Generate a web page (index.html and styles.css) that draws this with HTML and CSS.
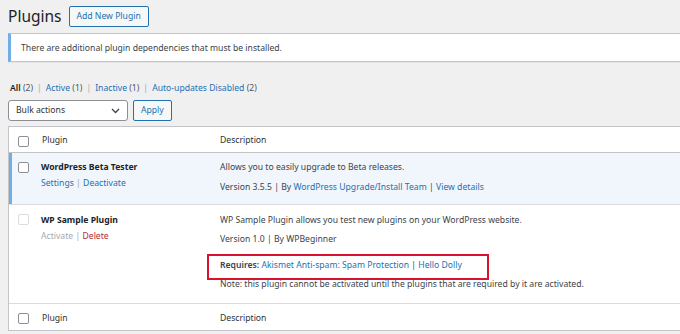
FILE: index.html
```html
<!DOCTYPE html>
<html lang="en">

<head>
    <meta charset="UTF-8">
    <meta name="viewport" content="width=device-width, initial-scale=1.0">
    <title>Plugins</title>
    <link rel="stylesheet" href="styles.css">
</head>

<body>
    <div class="wrap">
        <div class="page-head">
            <h1 class="page-title">Plugins</h1>
            <a class="button" href="#">Add New Plugin</a>
        </div>

        <div class="notice">There are additional plugin dependencies that must be installed.</div>

        <ul class="subsubsub">
            <li class="current">All <span class="count">(2)</span></li>
            <li class="sep">|</li>
            <li><a href="#">Active</a> <span class="count">(1)</span></li>
            <li class="sep">|</li>
            <li><a href="#">Inactive</a> <span class="count">(1)</span></li>
            <li class="sep">|</li>
            <li><a href="#">Auto-updates Disabled</a> <span class="count">(2)</span></li>
        </ul>

        <div class="tablenav">
            <div class="select">
                <span>Bulk actions</span>
                <svg width="9" height="6" viewBox="0 0 9 6">
                    <path d="M1 1l3.5 3.5L8 1" fill="none" stroke="#3c434a" stroke-width="1.3" />
                </svg>
            </div>
            <a class="button" href="#">Apply</a>
        </div>

        <table class="plugins">
            <colgroup>
                <col class="col-check">
                <col class="col-name">
                <col>
            </colgroup>
            <thead>
                <tr>
                    <th class="check"><input type="checkbox" class="cb"></th>
                    <th>Plugin</th>
                    <th>Description</th>
                </tr>
            </thead>
            <tbody>
                <tr class="active">
                    <th class="check"><input type="checkbox" class="cb"></th>
                    <td class="name">
                        <strong>WordPress Beta Tester</strong>
                        <div class="row-actions">
                            <a href="#">Settings</a> <span class="sep">|</span> <a href="#">Deactivate</a>
                        </div>
                    </td>
                    <td class="desc">
                        <p>Allows you to easily upgrade to Beta releases.</p>
                        <p>Version 3.5.5 | By <a href="#">WordPress Upgrade/Install Team</a> | <a href="#">View details</a></p>
                    </td>
                </tr>
                <tr class="inactive">
                    <th class="check"><input type="checkbox" class="cb" disabled></th>
                    <td class="name">
                        <strong>WP Sample Plugin</strong>
                        <div class="row-actions">
                            <span class="disabled">Activate</span> <span class="sep">|</span> <a class="delete" href="#">Delete</a>
                        </div>
                    </td>
                    <td class="desc">
                        <p>WP Sample Plugin allows you test new plugins on your WordPress website.</p>
                        <p>Version 1.0 | By WPBeginner</p>
                        <p class="requires"><b>Requires:</b> <a href="#">Akismet Anti-spam: Spam Protection</a> | <a href="#">Hello Dolly</a></p>
                        <p class="note">Note: this plugin cannot be activated until the plugins that are required by it are activated.</p>
                    </td>
                </tr>
            </tbody>
            <tfoot>
                <tr>
                    <th class="check"><input type="checkbox" class="cb"></th>
                    <th>Plugin</th>
                    <th>Description</th>
                </tr>
            </tfoot>
        </table>
    </div>
</body>

</html>
```

FILE: styles.css
```css
* {
    box-sizing: border-box;
}

html,
body {
    margin: 0;
    overflow: hidden;
}

body {
    background-color: #f0f0f1;
    color: #3c434a;
    font-family: "Noto Sans", "Open Sans", sans-serif;
    font-size: 8.65px;
    line-height: 13px;
}

a {
    color: #2271b1;
    text-decoration: none;
}

.wrap {
    margin-left: 8px;
    width: 720px;
}

.page-head {
    display: flex;
    align-items: center;
    gap: 7px;
    padding: 6px 0;
}

.page-title {
    margin: 0;
    font-size: 15.5px;
    font-weight: 400;
    line-height: 21px;
    color: #1d2327;
}

.button {
    display: inline-flex;
    align-items: center;
    height: 21px;
    padding: 0 7px;
    border: 1px solid #2271b1;
    border-radius: 2px;
    background: #f6f7f7;
    color: #2271b1;
}

.notice {
    height: 29px;
    padding: 8px 10px 0;
    background: white;
    border: 1px solid #c3c4c7;
    border-left: 3px solid #72aee6;
    box-shadow: 0 1px 1px rgba(0, 0, 0, 0.04);
}

.subsubsub {
    display: flex;
    gap: 4px;
    list-style: none;
    margin: 20px 0 0;
    padding: 0 0 0 2px;
    color: #50575e;
}

.subsubsub .current {
    color: #1d2327;
    font-weight: 600;
}

.subsubsub .count {
    font-weight: 400;
    color: #50575e;
}

.subsubsub .sep {
    color: #a7aaad;
}

.tablenav {
    display: flex;
    gap: 5px;
    margin-top: 5px;
}

.select {
    display: flex;
    align-items: center;
    justify-content: space-between;
    width: 120px;
    height: 21px;
    padding: 0 7px 0 7px;
    background: white;
    border: 1px solid #8c8f94;
    border-radius: 3px;
    color: #2c3338;
}

.plugins {
    width: 720px;
    margin-top: 5px;
    table-layout: fixed;
    border-spacing: 0;
    background: white;
    border: 1px solid #c3c4c7;
    box-shadow: 0 1px 1px rgba(0, 0, 0, 0.04);
}

.col-check {
    width: 26px;
}

.col-name {
    width: 178px;
}

.plugins th,
.plugins td {
    text-align: left;
    vertical-align: top;
    font-weight: 400;
}

.plugins thead th,
.plugins tfoot th {
    padding: 7px 7px 5px;
    color: #2c3338;
}

.plugins thead th {
    border-bottom: 1px solid #c3c4c7;
}

.plugins tfoot th {
    padding-top: 8px;
    border-top: 1px solid #dcdcde;
}

.plugins th.check {
    padding: 9px 0 0 9px;
}

.cb {
    appearance: none;
    display: block;
    width: 11px;
    height: 11px;
    margin: 0;
    background: white;
    border: 1px solid #8c8f94;
    border-radius: 2px;
}

.cb:disabled {
    border-color: #dcdcde;
}

.plugins tbody td {
    padding: 8px 7px 10px;
}

.plugins tbody td.name {
    padding-left: 6px;
}

.plugins tbody tr.active {
    background: #f0f6fc;
}

.plugins tbody tr.active th.check {
    box-shadow: inset 3px 0 0 #72aee6;
}

.plugins tbody tr.active > * {
    border-bottom: 1px solid #dcdcde;
}

.plugins tbody tr.inactive td {
    padding-top: 9px;
}

.plugins tbody tr.inactive td.desc {
    padding-bottom: 12px;
}

.name strong {
    display: block;
    color: #1d2327;
    font-weight: 700;
}

.row-actions {
    margin-top: 3px;
}

.row-actions .sep {
    color: #a7aaad;
}

.row-actions .disabled {
    color: #a7aaad;
}

.row-actions .delete {
    color: #b32d2e;
}

.desc p {
    margin: 0;
}

.desc p + p {
    margin-top: 6.5px;
}

.desc p.requires {
    position: relative;
    margin-top: 13px;
}

.desc p.requires b {
    font-weight: 600;
}

/* red highlight drawn over the screenshot */
.desc p.requires::after {
    content: "";
    box-sizing: border-box;
    position: absolute;
    left: -13px;
    top: -5.5px;
    width: 282px;
    height: 26px;
    border: 2.5px solid #d8122f;
}

.desc p.note {
    margin-top: 6.3px;
}
```
